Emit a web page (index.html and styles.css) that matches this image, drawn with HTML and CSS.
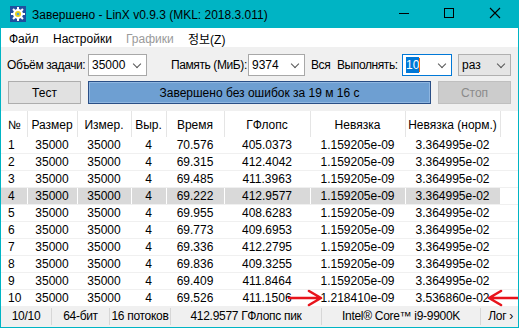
FILE: index.html
```html
<!DOCTYPE html>
<html lang="ru">
<head>
    <meta charset="UTF-8">
    <title>Завершено - LinX v0.9.3</title>
    <link rel="stylesheet" href="styles.css">
</head>
<body>
    <div class="window">
        <div class="titlebar">
            <svg class="app-icon" width="16" height="16" viewBox="0 0 16 16">
                <rect x="0" y="0" width="16" height="16" fill="#1f4f9e"/>
                <g fill="#ffffff">
                    <circle cx="8" cy="8" r="5"/>
                    <rect x="7" y="1" width="2" height="14"/>
                    <rect x="1" y="7" width="14" height="2"/>
                    <rect x="7" y="1" width="2" height="14" transform="rotate(45 8 8)"/>
                    <rect x="7" y="1" width="2" height="14" transform="rotate(-45 8 8)"/>
                </g>
                <circle cx="8" cy="8" r="3" fill="#e8d21a"/>
                <circle cx="8" cy="8" r="1.3" fill="#4aa0d8"/>
            </svg>
            <span class="title-text">Завершено - LinX v0.9.3 (MKL: 2018.3.011)</span>
            <div class="win-controls">
                <svg class="ctl" width="46" height="28" viewBox="0 0 46 28"><line x1="18" y1="13.5" x2="28" y2="13.5" stroke="#000" stroke-width="1"/></svg>
                <svg class="ctl" width="46" height="28" viewBox="0 0 46 28"><rect x="17.5" y="8.5" width="9" height="9" fill="none" stroke="#000" stroke-width="1"/></svg>
                <svg class="ctl" width="46" height="28" viewBox="0 0 46 28"><path d="M17 8 L27 18 M27 8 L17 18" stroke="#000" stroke-width="1.1"/></svg>
            </div>
        </div>

        <div class="menubar">
            <span class="menu-item m1">Файл</span>
            <span class="menu-item m2">Настройки</span>
            <span class="menu-item m3 disabled">Графики</span>
            <span class="menu-item m4">정보(Z)</span>
        </div>

        <div class="toolbar">
            <div class="tool-row">
                <span class="lbl lbl-size">Объём задачи:</span>
                <div class="combo w-size"><span>35000</span><i class="chev"></i></div>
                <span class="lbl lbl-mem">Память (МиБ):</span>
                <div class="combo w-mem"><span>9374</span><i class="chev"></i></div>
                <span class="lbl lbl-all">Вся</span>
                <span class="lbl lbl-run">Выполнять:</span>
                <div class="combo focused w-run"><span class="sel">10</span><b class="caret"></b><i class="chev"></i></div>
                <div class="combo dropdown w-times"><span>раз</span><i class="chev"></i></div>
            </div>
            <div class="tool-row row2">
                <div class="btn">Тест</div>
                <div class="progress">Завершено без ошибок за 19 м 16 с</div>
                <div class="btn disabled">Стоп</div>
            </div>
        </div>

        <div class="table-wrap">
            <table class="results">
                <colgroup>
                    <col style="width:26px"><col style="width:50px"><col style="width:54px"><col style="width:35px">
                    <col style="width:58px"><col style="width:86px"><col style="width:95px"><col style="width:95px"><col>
                </colgroup>
                <thead>
                    <tr>
                        <th class="num">№</th><th>Размер</th><th>Измер.</th><th>Выр.</th><th>Время</th>
                        <th>ГФлопс</th><th>Невязка</th><th>Невязка (норм.)</th><th class="rest"></th>
                    </tr>
                </thead>
                <tbody id="rows"></tbody>
            </table>
        </div>

        <div class="statusbar">
            <span class="sb s1">10/10</span>
            <span class="sb s2">64-бит</span>
            <span class="sb s3">16 потоков</span>
            <span class="sb s4">412.9577 ГФлопс пик</span>
            <span class="sb s5">Intel® Core™ i9-9900K</span>
            <span class="sb s6">Лог ›</span>
        </div>

        <svg class="arrow arrow-right" width="36" height="18" viewBox="0 0 36 18">
            <path d="M1 9 L32 9 M21 2 L33 9 L21 16" fill="none" stroke="#e8141c" stroke-width="2.6" stroke-linecap="round" stroke-linejoin="round"/>
        </svg>
        <svg class="arrow arrow-left" width="32" height="18" viewBox="0 0 32 18">
            <path d="M32 9 L3 9 M14 2 L2 9 L14 16" fill="none" stroke="#e8141c" stroke-width="2.6" stroke-linecap="round" stroke-linejoin="round"/>
        </svg>
    </div>

    <script>
        // результаты прогонов
        const runs = [
            ['70.576', '405.0373', '1.159205e-09', '3.364995e-02'],
            ['69.315', '412.4042', '1.159205e-09', '3.364995e-02'],
            ['69.485', '411.3963', '1.159205e-09', '3.364995e-02'],
            ['69.222', '412.9577', '1.159205e-09', '3.364995e-02'],
            ['69.955', '408.6283', '1.159205e-09', '3.364995e-02'],
            ['69.773', '409.6953', '1.159205e-09', '3.364995e-02'],
            ['69.336', '412.2795', '1.159205e-09', '3.364995e-02'],
            ['69.836', '409.3255', '1.159205e-09', '3.364995e-02'],
            ['69.409', '411.8464', '1.159205e-09', '3.364995e-02'],
            ['69.526', '411.1506', '1.218410e-09', '3.536860e-02']
        ];

        const tbody = document.getElementById('rows');
        runs.forEach(function(r, i) {
            const tr = document.createElement('tr');
            if (i === 3) tr.className = 'best';
            tr.innerHTML = `
                <td class="num">${i + 1}</td>
                <td>35000</td>
                <td>35000</td>
                <td>4</td>
                <td>${r[0]}</td>
                <td>${r[1]}</td>
                <td>${r[2]}</td>
                <td>${r[3]}</td>
                <td class="rest"></td>
            `;
            tbody.appendChild(tr);
        });
    </script>
</body>
</html>
```

FILE: styles.css
```css
body {
    margin: 0;
    font-family: "Liberation Sans", "Noto Sans CJK KR", Arial, sans-serif;
    font-size: 12px;
    color: #000;
    background: #fff;
}

.window {
    position: relative;
    width: 519px;
    height: 328px;
    box-sizing: border-box;
    border: 1px solid #00b4c4;
    border-top: none;
    background-color: #f0f0f0;
    display: flex;
    flex-direction: column;
    overflow: hidden;
}

.titlebar {
    height: 28px;
    background-color: #00b4c4;
    display: flex;
    align-items: center;
    margin: 0 -1px;
}

.app-icon {
    margin-left: 10px;
    margin-right: 6px;
}

.title-text {
    font-size: 12px;
    flex-grow: 1;
    padding-top: 1px;
}

.win-controls {
    display: flex;
    align-self: flex-start;
}

.ctl {
    display: block;
}

.menubar {
    height: 19px;
    background-color: #fff;
    display: flex;
    align-items: center;
}

.menu-item {
    display: block;
    padding-top: 2px;
}

.m1 { margin-left: 8px; width: 44px; }
.m2 { width: 73px; }
.m3 { width: 62px; }
.menu-item.disabled { color: #9a9a9a; }

.toolbar {
    padding: 7px 6px 7px 6px;
    display: flex;
    flex-direction: column;
    gap: 5px;
}

.tool-row {
    display: flex;
    align-items: center;
    height: 22px;
}

.row2 {
    height: 23px;
    gap: 7px;
    margin-left: 1px;
}

.lbl {
    white-space: nowrap;
    letter-spacing: -0.4px;
}

.lbl-size { width: 81px; }
.lbl-mem { margin-left: 24px; width: 77px; }
.lbl-all { margin-left: 6px; width: 26px; }
.lbl-run { width: 65px; }

.combo {
    position: relative;
    height: 22px;
    box-sizing: border-box;
    background-color: #fff;
    border: 1px solid #a8a8a8;
    display: flex;
    align-items: center;
    padding-left: 3px;
}

.w-size { width: 59px; }
.w-mem { width: 57px; }
.w-run { width: 50px; }
.w-times { width: 53px; margin-left: 6px; }

.combo.focused {
    border-color: #0078d7;
}

.combo.dropdown {
    background-color: #e5e5e5;
    border-color: #b0b0b0;
}

.sel {
    background-color: #0078d7;
    color: #fff;
    padding: 1px 0;
    line-height: 14px;
}

.caret {
    width: 1px;
    height: 14px;
    background-color: #ff6a00;
}

.chev {
    position: absolute;
    right: 6px;
    top: 6px;
    width: 5px;
    height: 5px;
    border-right: 1px solid #555;
    border-bottom: 1px solid #555;
    transform: rotate(45deg);
}

.btn {
    width: 73px;
    height: 23px;
    box-sizing: border-box;
    border: 1px solid #adadad;
    background-color: #e1e1e1;
    display: flex;
    align-items: center;
    justify-content: center;
}

.btn.disabled {
    background-color: #cccccc;
    border-color: #bfbfbf;
    color: #8a8a8a;
}

.progress {
    width: 343px;
    height: 23px;
    box-sizing: border-box;
    border: 1px solid #2a4f86;
    box-shadow: inset 0 0 0 1px #8fb6e0;
    background-color: #6e9fd2;
    display: flex;
    align-items: center;
    justify-content: center;
}

.table-wrap {
    height: 195px;
    background-color: #fff;
    overflow: hidden;
}

.results {
    width: 517px;
    table-layout: fixed;
    border-collapse: collapse;
}

.results th {
    height: 25px;
    padding: 0;
    font-weight: normal;
    text-align: center;
    border-right: 1px solid #e5e5e5;
    vertical-align: middle;
    padding-top: 1px;
}

.results th.rest {
    border-right: none;
}

.results td {
    height: 16px;
    padding: 0;
    text-align: center;
    border-right: 1px solid #fff;
    border-bottom: 1px solid #f0f0f0;
    white-space: nowrap;
}

.results .num {
    text-align: left;
    padding-left: 7px;
}

.results tr.best td {
    background-color: #d9d9d9;
}

.results tr.best td.rest {
    background-color: #fff;
}

.statusbar {
    height: 21px;
    display: flex;
    align-items: center;
    background-color: #f0f0f0;
}

.sb {
    height: 17px;
    line-height: 17px;
    box-sizing: border-box;
    border-right: 1px solid #d7d7d7;
    text-align: center;
    white-space: nowrap;
    letter-spacing: -0.3px;
}

.s1 { width: 51px; }
.s2 { width: 58px; }
.s3 { width: 61px; }
.s4 { width: 151px; }
.s5 { width: 159px; }
.s6 { width: 36px; border-right: none; text-align: right; padding-right: 4px; }

.arrow {
    position: absolute;
}

.arrow-right {
    left: 287px;
    top: 289px;
}

.arrow-left {
    left: 486px;
    top: 289px;
}
```
